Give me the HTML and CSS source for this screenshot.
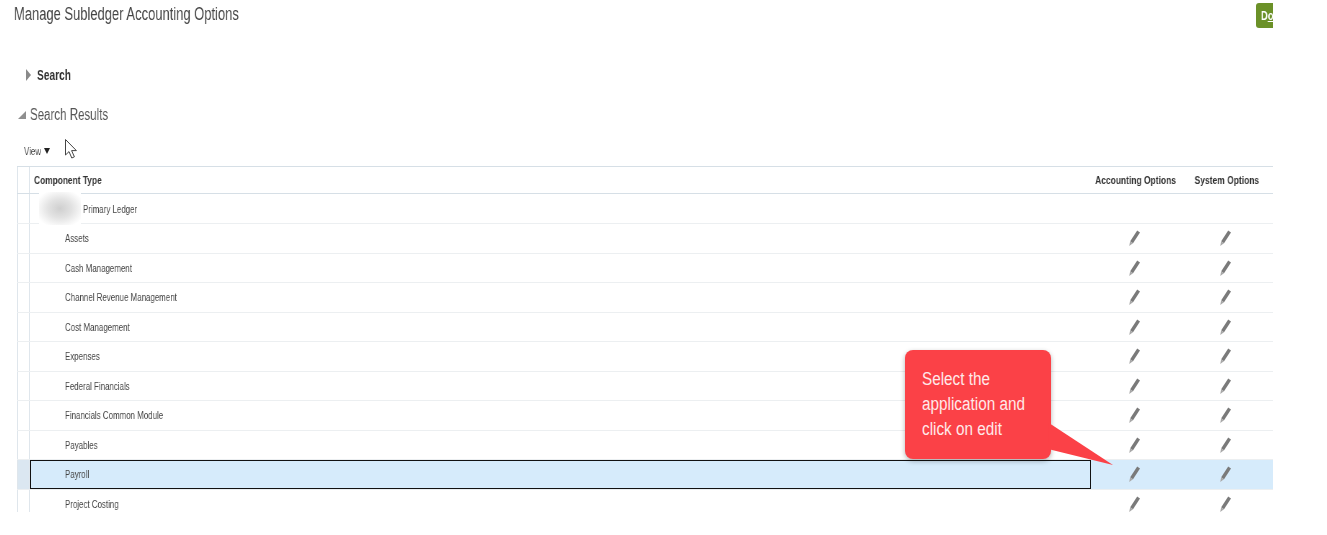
FILE: index.html
```html
<!DOCTYPE html>
<html lang="en">
<head>
    <meta charset="UTF-8">
    <title>Manage Subledger Accounting Options</title>
    <link rel="stylesheet" href="styles.css">
</head>
<body>
    <svg class="defs" width="0" height="0">
        <symbol id="pencil" viewBox="0 0 14 18">
            <path d="M10.2 1.4 13 3.4 6 14.2 3.2 12.2Z"/>
            <path class="pencil-tip" d="M3.2 12.2 6 14.2 2.2 17Z"/>
        </symbol>
    </svg>
    <div class="page">
        <header class="title-bar">
            <h1><span class="tx">Manage Subledger Accounting Options</span></h1>
            <button class="done-btn" type="button"><span class="tx">D<u>o</u>ne</span></button>
        </header>

        <section class="search-head">
            <span class="arrow-right"></span>
            <h2><span class="tx">Search</span></h2>
        </section>

        <section class="results-head">
            <span class="arrow-down"></span>
            <h2><span class="tx">Search Results</span></h2>
        </section>

        <div class="toolbar"><span class="tx">View</span><span class="caret"></span></div>

        <div class="table-clip">
            <div class="row head-row">
                <div class="gutter"></div>
                <div class="name"><span class="tx">Component Type</span></div>
                <div class="col-a"><span class="tx">Accounting Options</span></div>
                <div class="col-b"><span class="tx">System Options</span></div>
            </div>
            <div class="row ledger-row">
                <div class="gutter"></div>
                <div class="name"><span class="blur"></span><span class="tx">Primary Ledger</span></div>
                <div class="col-a"></div>
                <div class="col-b"></div>
            </div>
            <div class="row">
                <div class="gutter"></div>
                <div class="name child"><span class="tx">Assets</span></div>
                <div class="col-a"><svg class="pencil"><use href="#pencil"/></svg></div>
                <div class="col-b"><svg class="pencil"><use href="#pencil"/></svg></div>
            </div>
            <div class="row">
                <div class="gutter"></div>
                <div class="name child"><span class="tx">Cash Management</span></div>
                <div class="col-a"><svg class="pencil"><use href="#pencil"/></svg></div>
                <div class="col-b"><svg class="pencil"><use href="#pencil"/></svg></div>
            </div>
            <div class="row">
                <div class="gutter"></div>
                <div class="name child"><span class="tx">Channel Revenue Management</span></div>
                <div class="col-a"><svg class="pencil"><use href="#pencil"/></svg></div>
                <div class="col-b"><svg class="pencil"><use href="#pencil"/></svg></div>
            </div>
            <div class="row">
                <div class="gutter"></div>
                <div class="name child"><span class="tx">Cost Management</span></div>
                <div class="col-a"><svg class="pencil"><use href="#pencil"/></svg></div>
                <div class="col-b"><svg class="pencil"><use href="#pencil"/></svg></div>
            </div>
            <div class="row">
                <div class="gutter"></div>
                <div class="name child"><span class="tx">Expenses</span></div>
                <div class="col-a"><svg class="pencil"><use href="#pencil"/></svg></div>
                <div class="col-b"><svg class="pencil"><use href="#pencil"/></svg></div>
            </div>
            <div class="row">
                <div class="gutter"></div>
                <div class="name child"><span class="tx">Federal Financials</span></div>
                <div class="col-a"><svg class="pencil"><use href="#pencil"/></svg></div>
                <div class="col-b"><svg class="pencil"><use href="#pencil"/></svg></div>
            </div>
            <div class="row">
                <div class="gutter"></div>
                <div class="name child"><span class="tx">Financials Common Module</span></div>
                <div class="col-a"><svg class="pencil"><use href="#pencil"/></svg></div>
                <div class="col-b"><svg class="pencil"><use href="#pencil"/></svg></div>
            </div>
            <div class="row">
                <div class="gutter"></div>
                <div class="name child"><span class="tx">Payables</span></div>
                <div class="col-a"><svg class="pencil"><use href="#pencil"/></svg></div>
                <div class="col-b"><svg class="pencil"><use href="#pencil"/></svg></div>
            </div>
            <div class="row selected">
                <div class="gutter"></div>
                <div class="name child"><span class="tx">Payroll</span></div>
                <div class="col-a"><svg class="pencil"><use href="#pencil"/></svg></div>
                <div class="col-b"><svg class="pencil"><use href="#pencil"/></svg></div>
            </div>
            <div class="row">
                <div class="gutter"></div>
                <div class="name child"><span class="tx">Project Costing</span></div>
                <div class="col-a"><svg class="pencil"><use href="#pencil"/></svg></div>
                <div class="col-b"><svg class="pencil"><use href="#pencil"/></svg></div>
            </div>
        </div>

        <svg class="cursor" viewBox="0 0 14 22"><path d="M1.5 1.5V17L5 13.6 7.8 20 10.4 18.8 7.6 12.6H12.4Z"/></svg>

        <div class="callout">
            <svg class="callout-tail" viewBox="0 0 80 44"><path d="M2 0 66 42 1 26Z"/></svg>
            <p>Select the application and click on edit</p>
        </div>
    </div>
</body>
</html>
```

FILE: styles.css
```css
/* General Styles */
html, body {
    margin: 0;
    padding: 0;
    background-color: #ffffff;
}

body {
    font-family: "Liberation Sans", Arial, sans-serif;
    color: #333;
    height: 535px;
    overflow: hidden;
}

.defs {
    position: absolute;
}

.page {
    position: relative;
    width: 1273px;
    height: 512px;
    overflow: hidden;
}

/* the source shot is squeezed sideways, so all text is narrowed */
.tx {
    display: inline-block;
    transform: scaleX(0.72);
    transform-origin: left center;
    white-space: nowrap;
    will-change: transform;
}

/* Title */
.title-bar {
    display: flex;
    justify-content: space-between;
    align-items: flex-start;
    height: 56px;
    padding: 3px 0 0 14px;
    box-sizing: border-box;
}

.title-bar h1 {
    margin: 1px 0 0;
    font-size: 18px;
    font-weight: normal;
    color: #444;
    line-height: 20px;
}

.done-btn {
    flex: none;
    width: 48px;
    height: 25px;
    margin-right: -31px;
    padding: 0 0 0 5px;
    border: none;
    border-radius: 3px 0 0 3px;
    background-color: #6b9128;
    color: #ffffff;
    font-family: inherit;
    font-size: 13px;
    font-weight: bold;
    text-align: left;
}

/* Section heads */
.search-head,
.results-head {
    display: flex;
    align-items: center;
}

.search-head {
    height: 38px;
    padding-left: 26px;
    gap: 6px;
}

.results-head {
    height: 41px;
    padding-left: 18px;
    gap: 4px;
}

.search-head h2 {
    margin: -2px 0 0;
    font-size: 15px;
    font-weight: bold;
    color: #333;
}

.search-head .tx {
    transform: scaleX(0.68);
}

.results-head h2 {
    margin: 1px 0 0;
    font-size: 16px;
    font-weight: normal;
    color: #555;
}

.arrow-right {
    width: 0;
    height: 0;
    border-left: 5px solid #8a8a8a;
    border-top: 6px solid transparent;
    border-bottom: 6px solid transparent;
}

.arrow-down {
    width: 0;
    height: 0;
    border-right: 8px solid #8f8f8f;
    border-top: 8px solid transparent;
}

/* Toolbar */
.toolbar {
    display: flex;
    align-items: center;
    height: 31px;
    padding: 0 0 0 24px;
    box-sizing: border-box;
    font-size: 11px;
    color: #444;
}

.caret {
    width: 0;
    height: 0;
    margin-left: -4px;
    border-left: 3.5px solid transparent;
    border-right: 3.5px solid transparent;
    border-top: 6px solid #222;
}

/* Table */
.table-clip {
    margin-left: 17px;
    border-top: 1px solid #d6dfe6;
}

.row {
    display: grid;
    grid-template-columns: 13px 1061px 91px 91px;
    height: 29.5px;
    box-sizing: border-box;
    border-bottom: 1px solid #eceff1;
    font-size: 11px;
    color: #444;
}

.row > div {
    display: flex;
    align-items: center;
    min-width: 0;
}

.gutter {
    border-left: 1px solid #dfe6ec;
    border-right: 1px solid #dfe6ec;
    box-sizing: border-box;
}

.name {
    padding-left: 4px;
    white-space: nowrap;
}

.child {
    padding-left: 35px;
}

.col-a,
.col-b {
    justify-content: center;
    white-space: nowrap;
}

.col-a .tx,
.col-b .tx {
    margin-right: 2px;
    transform-origin: center;
    transform: scaleX(0.77);
}

.head-row {
    height: 27px;
    border-bottom-color: #d6dfe6;
    font-weight: bold;
    color: #333;
}

.head-row .name .tx {
    transform: scaleX(0.76);
}

.ledger-row {
    height: 30px;
}

/* redacted ledger name */
.blur {
    position: relative;
    flex: none;
    width: 42px;
    height: 33px;
    margin: -2px 2px -2px 5px;
    background: radial-gradient(ellipse at center, #cfcfcf 0%, #e2e2e2 40%, #f6f6f6 70%, #ffffff 85%);
}

.selected {
    background-color: #d6ebfb;
}

.selected .gutter {
    background-color: #dbe7f1;
}

.selected .name {
    outline: 1.5px solid #111;
    outline-offset: -1px;
}

.pencil {
    width: 14px;
    height: 18px;
    margin-right: 6px;
    fill: #7a7a7a;
}

.pencil-tip {
    fill: #a8a8a8;
}

/* Things that sit over the page */
.cursor {
    position: absolute;
    left: 64px;
    top: 138px;
    width: 14px;
    height: 22px;
    fill: #ffffff;
    stroke: #444;
    stroke-width: 1;
}

.callout {
    position: absolute;
    left: 905px;
    top: 350px;
    width: 146px;
    height: 109px;
    box-sizing: border-box;
    padding: 17px 0 0 17px;
    background-color: #fb4147;
    border-radius: 8px;
    box-shadow: 0 2px 5px rgba(0, 0, 0, 0.3);
}

.callout p {
    position: relative;
    width: 130px;
    margin: 0;
    font-size: 18px;
    line-height: 24.8px;
    color: #ffe9e9;
    transform: scaleX(0.85);
    transform-origin: left top;
}

.callout-tail {
    position: absolute;
    left: 142px;
    top: 73px;
    width: 80px;
    height: 44px;
    fill: #fb4147;
}
```
